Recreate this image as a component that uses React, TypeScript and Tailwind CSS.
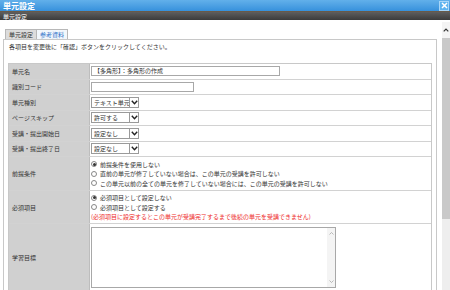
import type { ReactNode } from 'react'

function Chevron() {
  return (
    <svg width="7" height="5" viewBox="0 0 7 5" className="block">
      <path d="M0.8 0.8 L3.5 3.8 L6.2 0.8" fill="none" stroke="#222" strokeWidth="1.4" />
    </svg>
  )
}

function Select({ value, width = 'w-[48px]' }: { value: string; width?: string }) {
  return (
    <div className={`flex h-[11px] ${width} items-stretch border border-[#9a9a9a] bg-white`}>
      <span className="flex-1 overflow-hidden whitespace-nowrap pl-[2px] leading-[9px]">{value}</span>
      <span className="flex w-[9px] items-center justify-center border-l border-[#9a9a9a]">
        <Chevron />
      </span>
    </div>
  )
}

function Radio({ checked, label }: { checked?: boolean; label: string }) {
  return (
    <div className="flex h-[9.5px] items-center gap-[3px] whitespace-nowrap">
      <span className="flex h-[6px] w-[6px] items-center justify-center rounded-full border border-[#888] bg-white">
        {checked && <span className="h-[3px] w-[3px] rounded-full bg-[#333]" />}
      </span>
      <span>{label}</span>
    </div>
  )
}

function Row({ label, h, children, last }: { label: string; h: string; children: ReactNode; last?: boolean }) {
  return (
    <div className={`flex ${h} ${last ? '' : 'border-b border-[#d2d2d2]'}`}>
      <div className="flex w-[81px] shrink-0 items-center border-r border-[#bdbdbd] bg-[#d0d0d0] pl-[3px] text-[#333]">
        {label}
      </div>
      <div className="flex flex-1 flex-col justify-center pl-[1px]">{children}</div>
    </div>
  )
}

export default function App() {
  return (
    <div className="h-[290px] w-[450px] overflow-hidden bg-white font-['Noto_Sans_CJK_JP',sans-serif] text-[6px] text-[#333]">
      <div className="flex h-[11px] items-center justify-between bg-gradient-to-b from-[#62b0ea] to-[#3691dc] pl-[3px] pr-[1px]">
        <span className="text-[8px] font-bold leading-none text-white">単元設定</span>
        <span className="flex h-[10px] w-[10px] items-center justify-center border border-[#a8d6f8] bg-[#5eb4f0]">
          <svg width="7" height="7" viewBox="0 0 7 7">
            <path d="M1 1 L6 6 M6 1 L1 6" stroke="#fff" strokeWidth="1.5" />
          </svg>
        </span>
      </div>
      <div className="flex h-[9px] items-center border-t border-[#6a5a48] bg-gradient-to-b from-[#5e5e5e] to-[#3c3c3c] pl-[3px] text-white">
        単元設定
      </div>

      <div className="flex h-[270px]">
        <div className="flex-1 pl-[3px] pr-[5px] pt-[9px]">
          <div className="flex h-[10px] pl-[2px]">
            <span className="flex items-center border border-b-0 border-[#b8b8b8] bg-[#dcdcdc] px-[3px]">単元設定</span>
            <span className="flex items-center border border-b-0 border-l-0 border-[#b8b8b8] bg-[#f2f7fc] px-[3px] text-[#2a70c8]">
              参考資料
            </span>
          </div>
          <div className="h-[260px] border border-b-0 border-[#c8c8c8] px-[4px] pt-[1px]">
            <p className="mb-[10px] pl-[1px] leading-[12px]">各項目を変更後に「確認」ボタンをクリックしてください。</p>
            <div className="border border-[#c8c8c8]">
              <Row label="単元名" h="h-[15.5px]">
                <div className="h-[10px] w-[189px] overflow-hidden whitespace-nowrap border border-[#a8a8a8] pl-[2px] leading-[8px]">
                  【多角形】：多角形の作成
                </div>
              </Row>
              <Row label="識別コード" h="h-[15.5px]">
                <div className="h-[10px] w-[103px] border border-[#a8a8a8]" />
              </Row>
              <Row label="単元種別" h="h-[15.5px]">
                <Select value="テキスト単元" />
              </Row>
              <Row label="ページスキップ" h="h-[15.5px]">
                <Select value="許可する" />
              </Row>
              <Row label="受講・提出開始日" h="h-[15.5px]">
                <Select value="設定なし" />
              </Row>
              <Row label="受講・提出終了日" h="h-[15.5px]">
                <Select value="設定なし" />
              </Row>
              <Row label="前提条件" h="h-[34px]">
                <Radio checked label="前提条件を使用しない" />
                <Radio label="直前の単元が修了していない場合は、この単元の受講を許可しない" />
                <Radio label="この単元以前の全ての単元を修了していない場合には、この単元の受講を許可しない" />
              </Row>
              <Row label="必須項目" h="h-[33px]">
                <Radio checked label="必須項目として設定しない" />
                <Radio label="必須項目として設定する" />
                <div className="h-[9.5px] whitespace-nowrap leading-[9.5px] text-[#ee2a2a]">
                  (必須項目に設定するとこの単元が受講完了するまで後続の単元を受講できません)
                </div>
              </Row>
              <Row label="学習目標" h="h-[66px]" last>
                <div className="flex h-[61px] w-[245px] justify-end border border-[#a8a8a8] bg-white">
                  <div className="flex w-[8px] flex-col items-center justify-between bg-[#f4f4f4] py-[4px]">
                    <svg width="5" height="3" viewBox="0 0 5 3">
                      <path d="M0.5 2.5 L2.5 0.5 L4.5 2.5" fill="none" stroke="#aaa" strokeWidth="0.8" />
                    </svg>
                    <svg width="5" height="3" viewBox="0 0 5 3">
                      <path d="M0.5 0.5 L2.5 2.5 L4.5 0.5" fill="none" stroke="#aaa" strokeWidth="0.8" />
                    </svg>
                  </div>
                </div>
              </Row>
            </div>
          </div>
        </div>

        <div className="mt-[2px] flex w-[8px] flex-col bg-[#eeeeee]">
          <div className="flex h-[16px] items-center justify-center bg-[#f4f4f4]">
            <svg width="6" height="4" viewBox="0 0 6 4">
              <path d="M0.7 3.3 L3 1 L5.3 3.3" fill="none" stroke="#333" strokeWidth="1.2" />
            </svg>
          </div>
          <div className="h-[181px] bg-[#c9c9c9]" />
        </div>
      </div>
    </div>
  )
}
